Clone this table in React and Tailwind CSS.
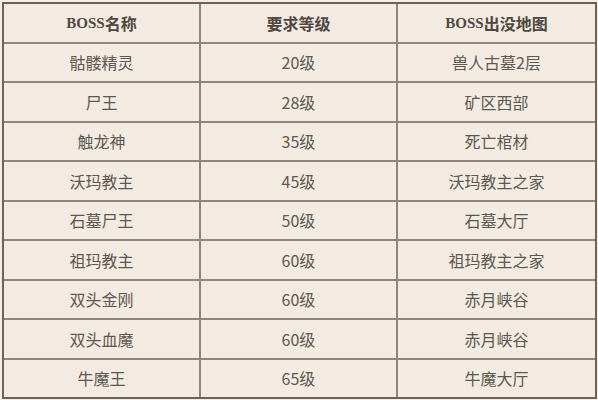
import React from 'react'

const rows = [
    ['骷髅精灵', '20级', '兽人古墓2层'],
    ['尸王', '28级', '矿区西部'],
    ['触龙神', '35级', '死亡棺材'],
    ['沃玛教主', '45级', '沃玛教主之家'],
    ['石墓尸王', '50级', '石墓大厅'],
    ['祖玛教主', '60级', '祖玛教主之家'],
    ['双头金刚', '60级', '赤月峡谷'],
    ['双头血魔', '60级', '赤月峡谷'],
    ['牛魔王', '65级', '牛魔大厅'],
]

const cjk = "font-['Noto_Sans_CJK_SC',sans-serif]"

const App = () => {
    return (
        <div className="w-[598px] h-[400px] bg-[#f4ede4] pt-[2px] pl-[2px] overflow-hidden">
            <div className="w-[595px] h-[397px] border-2 border-[#6c6257] bg-[#f3ebe1] flex flex-col">
                {/* header */}
                <div className="flex-1 grid grid-cols-3 border-b-2 border-[#8e857b]">
                    <div className="flex items-center justify-center border-r-2 border-[#8e857b] text-[#4f4842] text-[16px] font-bold">
                        <span className="font-['Liberation_Serif',serif] text-[15px]">BOSS</span>
                        <span className={cjk}>名称</span>
                    </div>
                    <div className={`flex items-center justify-center border-r-2 border-[#8e857b] text-[#4f4842] text-[16px] font-bold ${cjk}`}>
                        要求等级
                    </div>
                    <div className="flex items-center justify-center text-[#4f4842] text-[16px] font-bold">
                        <span className="font-['Liberation_Serif',serif] text-[15px]">BOSS</span>
                        <span className={cjk}>出没地图</span>
                    </div>
                </div>

                {rows.map((r, i) => (
                    <div
                        key={i}
                        className={`flex-1 grid grid-cols-3 ${i < rows.length - 1 ? 'border-b-2 border-[#8e857b]' : ''}`}
                    >
                        {r.map((c, j) => (
                            <div
                                key={j}
                                className={`flex items-center justify-center text-[16px] text-[#5d5752] ${cjk} ${j < 2 ? 'border-r-2 border-[#8e857b]' : ''}`}
                            >
                                {c}
                            </div>
                        ))}
                    </div>
                ))}
            </div>
        </div>
    )
}

export default App
